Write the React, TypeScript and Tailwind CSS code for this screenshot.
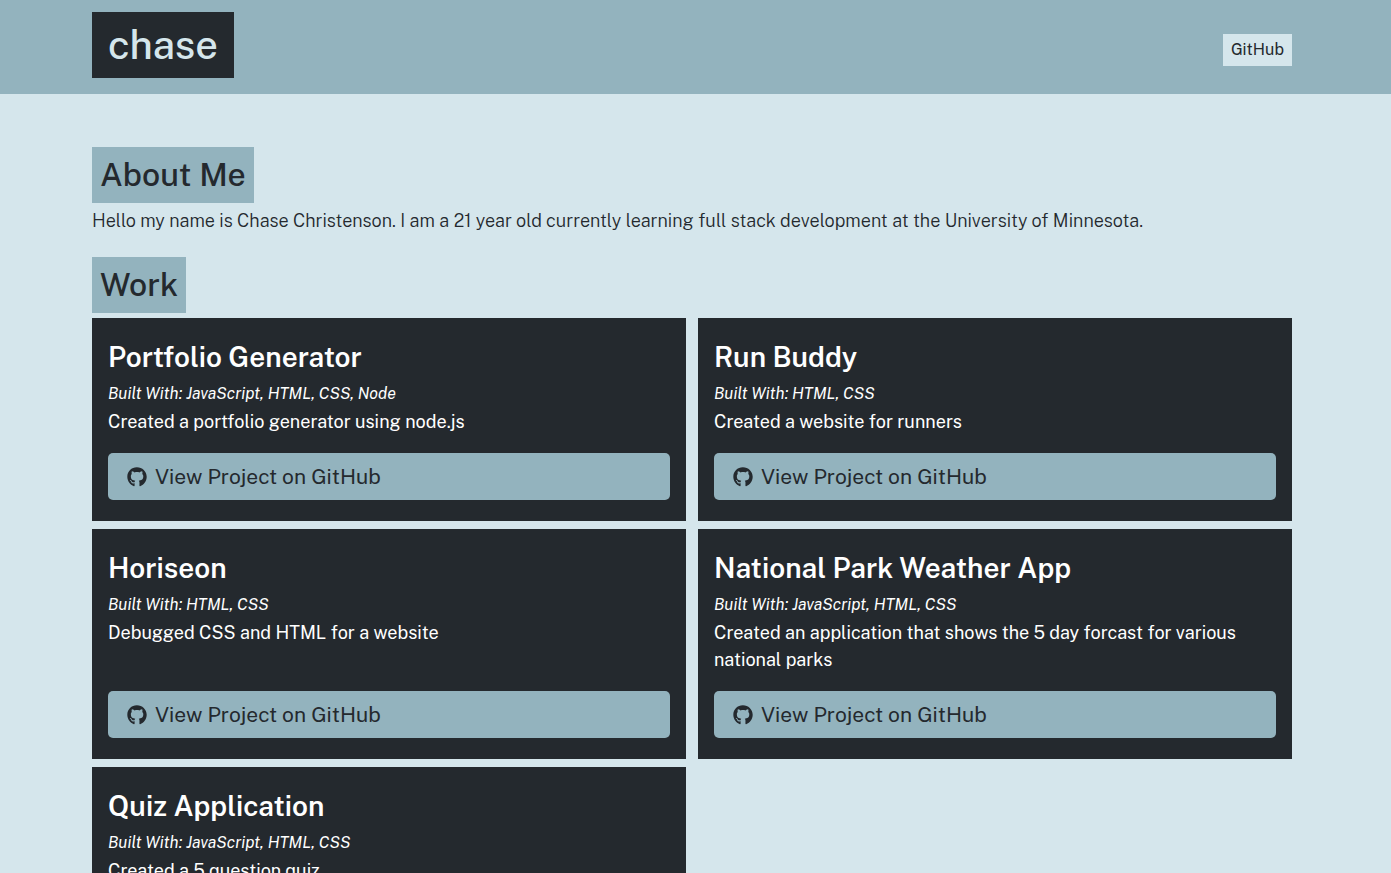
import { FaGithub } from 'react-icons/fa';

type Project = {
  name: string;
  languages: string[];
  description: string;
};

const projects: Project[] = [
  {
    name: 'Portfolio Generator',
    languages: ['JavaScript', 'HTML', 'CSS', 'Node'],
    description: 'Created a portfolio generator using node.js',
  },
  {
    name: 'Run Buddy',
    languages: ['HTML', 'CSS'],
    description: 'Created a website for runners',
  },
  {
    name: 'Horiseon',
    languages: ['HTML', 'CSS'],
    description: 'Debugged CSS and HTML for a website',
  },
  {
    name: 'National Park Weather App',
    languages: ['JavaScript', 'HTML', 'CSS'],
    description: 'Created an application that shows the 5 day forcast for various national parks',
  },
  {
    name: 'Quiz Application',
    languages: ['JavaScript', 'HTML', 'CSS'],
    description: 'Created a 5 question quiz',
  },
];

function ProjectCard({ name, languages, description }: Project) {
  return (
    <article className="flex flex-col bg-[#24292e] px-4 pt-5 pb-[21px] text-white">
      <h3 className="text-[28px] leading-[38px] font-semibold">{name}</h3>
      <h4 className="mt-1 text-base leading-7 font-normal italic">
        Built With: {languages.join(', ')}
      </h4>
      <p className="mb-[18px] text-lg leading-[27px] font-normal">{description}</p>
      <a
        href="https://github.com"
        className="mt-auto flex items-center gap-2 rounded-[5px] bg-[#93b3be] px-[19px] text-[21px] leading-[47px] font-normal text-[#24292e]"
      >
        <FaGithub className="size-5" aria-hidden="true" />
        View Project on GitHub
      </a>
    </article>
  );
}

export default function App() {
  return (
    <div className="min-h-screen bg-[#d5e6ec] font-['Public_Sans','Inter',sans-serif] text-[#24292e]">
      <header className="bg-[#93b3be] pt-3 pr-[7px] pb-4">
        <div className="mx-auto flex max-w-[1200px] items-center justify-between">
          <h1 className="bg-[#24292e] px-4 text-[40px] leading-[66px] font-medium text-[#d5e6ec]">
            chase
          </h1>
          <nav className="pt-2.5">
            <a href="https://github.com" className="block bg-[#d5e6ec] px-2 text-base leading-8">
              GitHub
            </a>
          </nav>
        </div>
      </header>
      <main className="pt-[53px] pr-[7px] pb-12">
        <div className="mx-auto max-w-[1200px]">
          <section>
            <h2 className="w-fit bg-[#93b3be] px-2 text-[32px] leading-[56px] font-medium">About Me</h2>
            <p className="mt-1 mb-[23px] text-lg leading-[27px] font-light">
              Hello my name is Chase Christenson. I am a 21 year old currently learning full stack
              development at the University of Minnesota.
            </p>
          </section>
          <section>
            <h2 className="w-fit bg-[#93b3be] px-2 text-[32px] leading-[56px] font-medium">Work</h2>
            <div className="mt-[5px] grid grid-cols-2 gap-x-3 gap-y-2">
              {projects.map((project) => (
                <ProjectCard key={project.name} {...project} />
              ))}
            </div>
          </section>
        </div>
      </main>
    </div>
  );
}
